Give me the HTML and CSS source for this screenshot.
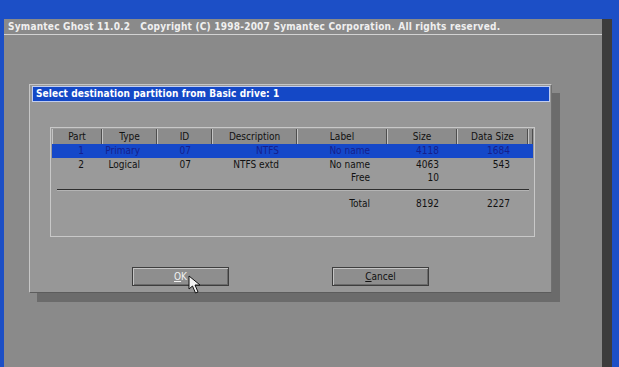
FILE: index.html
```html
<!DOCTYPE html>
<html lang="en">
<head>
    <meta charset="UTF-8">
    <title>Symantec Ghost 11.0.2</title>
    <link rel="stylesheet" href="styles.css">
</head>
<body>
    <div class="ghost">
        <div class="app-title">Symantec Ghost 11.0.2&nbsp;&nbsp;&nbsp;Copyright (C) 1998-2007 Symantec Corporation. All rights reserved.</div>

        <div class="dialog">
            <div class="dialog-title">Select destination partition from Basic drive: 1</div>

            <div class="parts">
                <div class="grid head">
                    <div>Part</div>
                    <div>Type</div>
                    <div>ID</div>
                    <div>Description</div>
                    <div>Label</div>
                    <div>Size</div>
                    <div>Data Size</div>
                    <div></div>
                </div>
                <div class="grid row selected">
                    <div>1</div>
                    <div>Primary</div>
                    <div>07</div>
                    <div>NTFS</div>
                    <div>No name</div>
                    <div>4118</div>
                    <div>1684</div>
                    <div></div>
                </div>
                <div class="grid row">
                    <div>2</div>
                    <div>Logical</div>
                    <div>07</div>
                    <div>NTFS extd</div>
                    <div>No name</div>
                    <div>4063</div>
                    <div>543</div>
                    <div></div>
                </div>
                <div class="grid row">
                    <div></div>
                    <div></div>
                    <div></div>
                    <div></div>
                    <div>Free</div>
                    <div>10</div>
                    <div></div>
                    <div></div>
                </div>
                <div class="divider"></div>
                <div class="grid row total">
                    <div></div>
                    <div></div>
                    <div></div>
                    <div></div>
                    <div>Total</div>
                    <div>8192</div>
                    <div>2227</div>
                    <div></div>
                </div>
            </div>

            <div class="buttons">
                <div class="btn focused"><u>O</u>K
                    <!-- mouse pointer over the OK button -->
                    <svg class="pointer" width="16" height="20" viewBox="0 0 16 20">
                        <path d="M1 1 L1 14 L4.5 11 L7.5 18 L10 17 L7 10 L12 10 Z" fill="#f4f4f4" stroke="#111" stroke-width="1"/>
                    </svg>
                </div>
                <div class="btn"><u>C</u>ancel</div>
            </div>
        </div>
    </div>
</body>
</html>
```

FILE: styles.css
```css
body {
    margin: 0;
    width: 619px;
    height: 367px;
    overflow: hidden;
    background-color: #1c4fc6;
    font-family: "DejaVu Sans Condensed", "DejaVu Sans", sans-serif;
}
.ghost {
    margin: 19px 0 0 4px;
    width: 598px;
    height: 348px;
    background-color: #8a8a8a;
    border-right: 10px solid #3c3c3c;
}
.app-title {
    height: 15px;
    line-height: 15px;
    padding-left: 4px;
    color: #f0f0f0;
    font-size: 10px;
    font-weight: bold;
    letter-spacing: 0.22px;
    border-bottom: 1px solid #d2d2d2;
    white-space: pre;
}
.dialog {
    margin: 49px 0 0 25px;
    width: 523px;
    height: 209px;
    box-sizing: border-box;
    background-color: #979797;
    border: 1px solid #c6c6c6;
    border-right-color: #707070;
    border-bottom-color: #5c5c5c;
    box-shadow: 8px 9px 0 #6b6b6b;
    display: flex;
    flex-direction: column;
}
.dialog-title {
    margin: 1px 1px 0 2px;
    height: 14px;
    line-height: 14px;
    padding-left: 3px;
    background-color: #1448c6;
    border: 1px solid #c0cdf0;
    color: #ffffff;
    font-size: 10px;
    font-weight: bold;
    letter-spacing: 0.1px;
}
.parts {
    margin: 25px 0 0 20px;
    width: 485px;
    height: 110px;
    box-sizing: border-box;
    border: 1px solid #c8c8c8;
    background-color: #9a9a9a;
    padding: 1px 1px 0 1px;
    font-size: 10px;
    color: #111;
}
.grid {
    display: grid;
    grid-template-columns: 50px 55px 55px 85px 90px 70px 71px 5px;
}
.head > div {
    height: 15px;
    line-height: 15px;
    text-align: center;
    background-color: #8c8c8c;
    border-left: 1px solid #c4c4c4;
    border-right: 1px solid #4e4e4e;
    box-sizing: border-box;
}
.row > div {
    height: 13px;
    line-height: 13px;
    text-align: right;
    padding-right: 18px;
}
.row > div:nth-child(2) {
    padding-right: 17px;
}
.row > div:nth-child(3) {
    padding-right: 21px;
}
.row > div:nth-child(5) {
    padding-right: 17px;
}
.selected {
    background-color: #1548c9;
    color: #15208c;
    height: 14px;
}
.selected > div {
    height: 14px;
    line-height: 14px;
}
.divider {
    margin: 5px 4px 0 5px;
    height: 1px;
    background-color: #2e2e2e;
    border-bottom: 1px solid #b4b4b4;
}
.total {
    margin-top: 6px;
}
.buttons {
    margin: 30px 0 0 102px;
    display: flex;
    gap: 103px;
}
.btn {
    position: relative;
    width: 97px;
    height: 19px;
    box-sizing: border-box;
    border: 1px solid #3e3e3e;
    box-shadow: inset 1px 1px 0 #c4c4c4, inset -1px -1px 0 #6a6a6a;
    background-color: #8e8e8e;
    text-align: center;
    line-height: 17px;
    font-size: 10px;
    color: #111;
}
.btn.focused {
    color: #f2f2f2;
}
.pointer {
    position: absolute;
    left: 55px;
    top: 7px;
}
```
